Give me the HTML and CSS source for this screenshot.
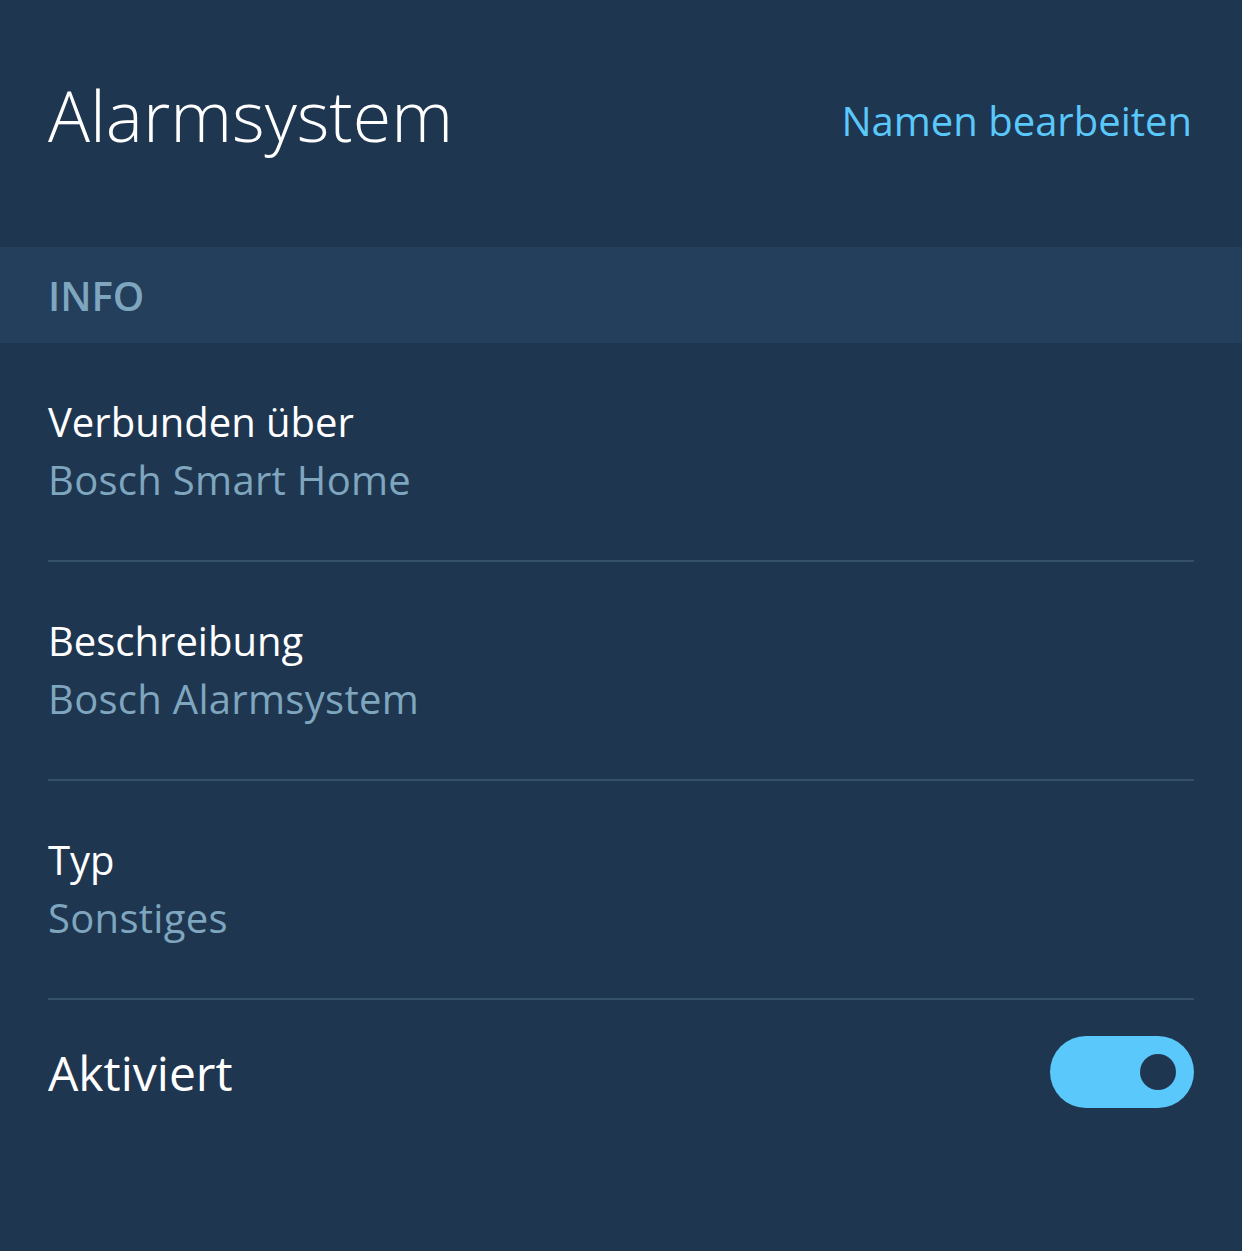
FILE: index.html
```html
<!DOCTYPE html>
<html lang="de">
<head>
    <meta charset="UTF-8">
    <meta name="viewport" content="width=device-width, initial-scale=1.0">
    <title>Alarmsystem</title>
    <link rel="stylesheet" href="styles.css">
</head>
<body>

    <!-- Kopfzeile -->
    <div class="header">
        <h1>Alarmsystem</h1>
        <a href="#" class="edit-link">Namen bearbeiten</a>
    </div>

    <div class="section-title">INFO</div>

    <!-- Geräteinfo -->
    <div class="rows">
        <div class="row">
            <div class="label">Verbunden über</div>
            <div class="value">Bosch Smart Home</div>
        </div>
        <div class="row">
            <div class="label">Beschreibung</div>
            <div class="value">Bosch Alarmsystem</div>
        </div>
        <div class="row">
            <div class="label">Typ</div>
            <div class="value">Sonstiges</div>
        </div>
        <div class="toggle-row">
            <span class="toggle-label">Aktiviert</span>
            <span class="toggle"><span class="knob"></span></span>
        </div>
    </div>

</body>
</html>
```

FILE: styles.css
```css
body {
    margin: 0;
    background-color: #1f3651;
    font-family: "Open Sans", "Noto Sans", sans-serif;
    color: #ffffff;
    height: 1251px;
}
.header {
    display: flex;
    justify-content: space-between;
    align-items: flex-start;
    height: 247px;
    box-sizing: border-box;
    padding: 73px 50px 0 48px;
}
h1 {
    margin: 0;
    font-size: 70px;
    line-height: 84px;
    font-weight: 300;
}
.edit-link {
    margin-top: 19px;
    font-size: 40px;
    line-height: 58px;
    color: #5ac8fa;
    text-decoration: none;
}
.section-title {
    height: 96px;
    box-sizing: border-box;
    padding: 0 48px;
    display: flex;
    align-items: center;
    background-color: #243f5c;
    color: #7fa6bf;
    font-size: 40px;
    font-weight: 600;
}
.rows {
    padding: 0 48px;
}
.row {
    padding: 50px 0 51px;
    border-bottom: 2px solid #34506b;
}
.label, .value {
    font-size: 40px;
    line-height: 58px;
}
.value {
    color: #7fa6bf;
    letter-spacing: 0.3px;
}
.toggle-row {
    display: flex;
    justify-content: space-between;
    align-items: center;
    height: 144px;
}
.toggle-label {
    font-size: 48px;
}
.toggle {
    display: flex;
    align-items: center;
    justify-content: flex-end;
    width: 144px;
    height: 72px;
    box-sizing: border-box;
    padding-right: 18px;
    border-radius: 36px;
    background-color: #5ac8fa;
}
.knob {
    width: 36px;
    height: 36px;
    border-radius: 50%;
    background-color: #1f3651;
}
```
